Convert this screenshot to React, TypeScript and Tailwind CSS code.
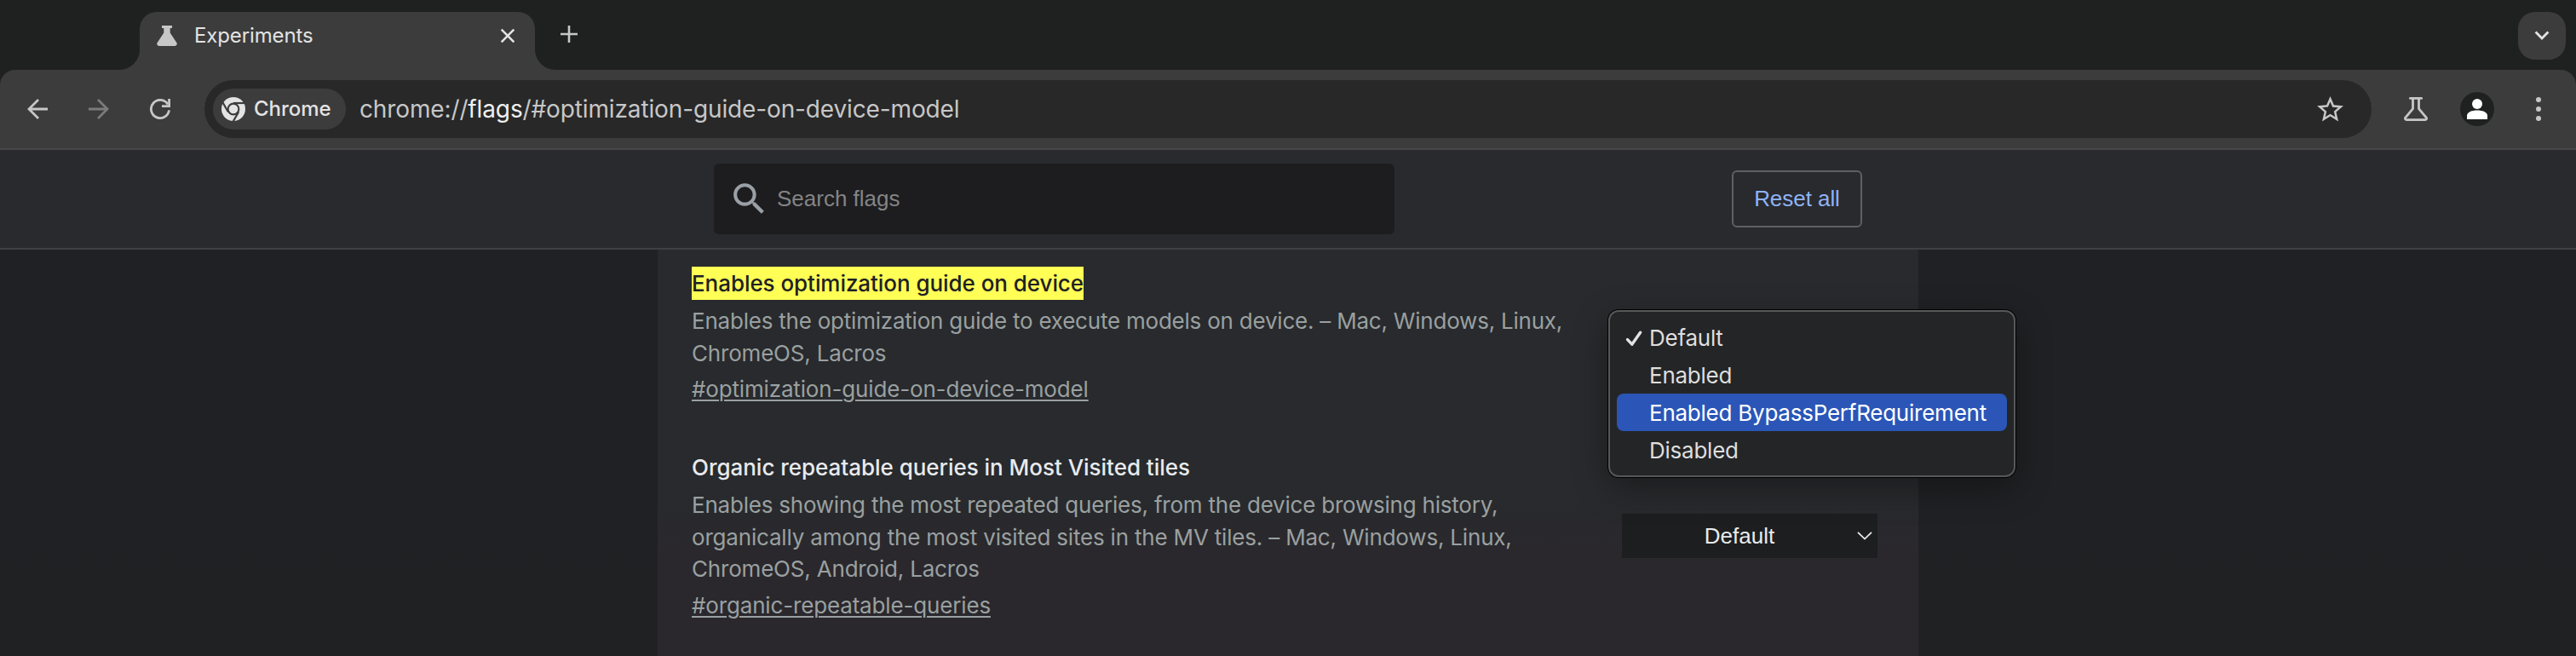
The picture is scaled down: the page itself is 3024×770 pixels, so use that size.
import type { ReactNode } from "react";

type Flag = {
  title: string;
  lines: string[];
  link: string;
  highlighted?: boolean;
};

const flags: Flag[] = [
  {
    title: "Enables optimization guide on device",
    lines: [
      "Enables the optimization guide to execute models on device. – Mac, Windows, Linux,",
      "ChromeOS, Lacros",
    ],
    link: "#optimization-guide-on-device-model",
    highlighted: true,
  },
  {
    title: "Organic repeatable queries in Most Visited tiles",
    lines: [
      "Enables showing the most repeated queries, from the device browsing history,",
      "organically among the most visited sites in the MV tiles. – Mac, Windows, Linux,",
      "ChromeOS, Android, Lacros",
    ],
    link: "#organic-repeatable-queries",
  },
];

const options = ["Default", "Enabled", "Enabled BypassPerfRequirement", "Disabled"];

function ChromeLogo() {
  return (
    <svg width="28" height="28" viewBox="-14 -14 28 28" className="shrink-0">
      <circle r="14" fill="#e3e3e3" />
      <circle r="7.4" fill="#3c3c3c" />
      <g stroke="#3c3c3c" strokeWidth="2.2">
        <path d="M0 -7H15" />
        <path d="M0 -7H15" transform="rotate(120)" />
        <path d="M0 -7H15" transform="rotate(240)" />
      </g>
      <circle r="5.3" fill="#e3e3e3" />
    </svg>
  );
}

function TabStrip() {
  return (
    <div className="flex h-[82px] items-end justify-between pr-3">
      <div className="flex h-[68px] items-end pl-[140px]">
        <div className="size-6 bg-[#3c3c3c]">
          <div className="size-6 rounded-br-[24px] bg-[#1f2120]" />
        </div>
        <div className="flex h-[68px] w-[464px] items-center rounded-t-[20px] bg-[#3c3c3c] pr-[23px] pb-3 pl-5">
          <svg width="24" height="24" viewBox="0 0 24 24" fill="#c7c7c7" className="shrink-0">
            <path d="M6 0H18V3H15.7V8.6L23.6 20.4Q24.4 23.2 21.6 24H2.4Q-.4 23.2 .4 20.4L8.3 8.6V3H6Z" />
          </svg>
          <span className="ml-[20px] grow text-[24px] leading-8 tracking-[-0.13px] text-[#e3e3e3]">
            Experiments
          </span>
          <svg width="18" height="18" viewBox="0 0 18 18" stroke="#e3e3e3" strokeWidth="2.6">
            <path d="M1.7 1.7L16.3 16.3M16.3 1.7L1.7 16.3" />
          </svg>
        </div>
        <div className="size-6 bg-[#3c3c3c]">
          <div className="size-6 rounded-bl-[24px] bg-[#1f2120]" />
        </div>
        <svg width="20" height="20" viewBox="0 0 20 20" stroke="#c7c7c7" strokeWidth="2.6" className="mb-8 ml-[6px]">
          <path d="M10 0V20M0 10H20" />
        </svg>
      </div>
      <div className="mb-3 flex size-14 items-center justify-center rounded-[20px] bg-[#3c3c3c]">
        <svg width="18" height="12" viewBox="0 0 18 12" fill="none" stroke="#e3e3e3" strokeWidth="2.8">
          <path d="M1.6 1.6L9 9L16.4 1.6" />
        </svg>
      </div>
    </div>
  );
}

function Toolbar() {
  return (
    <div className="flex h-[94px] items-center rounded-t-[18px] border-b-2 border-[#474747] bg-[#3c3c3c] pr-[41px] pl-8">
      <div className="flex w-[208px] gap-12">
        <svg width="24" height="24" viewBox="0 0 24 24" fill="none" stroke="#c7c7c7" strokeWidth="2.8">
          <path d="M24 12H2.4M13 1L2 12L13 23" />
        </svg>
        <svg width="24" height="24" viewBox="0 0 24 24" fill="none" stroke="#7b7b7b" strokeWidth="2.8">
          <path d="M0 12H21.6M11 1L22 12L11 23" />
        </svg>
        <svg width="24" height="24" viewBox="0 0 24 24" fill="none" stroke="#c7c7c7" strokeWidth="2.8">
          <path d="M22.5 13.4A10.6 10.6 0 1 1 21 6.4" />
          <path d="M22.6 0V8.6H14" />
        </svg>
      </div>
      <div className="flex h-[68px] w-[2544px] items-center rounded-full bg-[#282828] pr-[30px] pl-[10px]">
        <div className="flex h-12 w-[156px] items-center rounded-full bg-[#3c3c3c] pl-[10px]">
          <ChromeLogo />
          <span className="ml-[10px] text-[24px] leading-8 font-medium tracking-[-0.02px] text-[#e3e3e3]">Chrome</span>
        </div>
        <span className="ml-4 grow text-[28px] leading-9 tracking-[-0.13px] text-[#c7c7c7]">
          chrome://<span className="text-[#f0f0f0]">flags</span>/#optimization-guide-on-device-model
        </span>
        <svg width="37" height="37" viewBox="0 0 24 24" fill="#c7c7c7">
          <path d="M22 9.24l-7.19-.62L12 2 9.19 8.63 2 9.24l5.46 4.73L5.82 21 12 17.27 18.18 21l-1.63-7.03L22 9.24zM12 15.4l-3.76 2.27 1-4.28-3.32-2.88 4.38-.38L12 6.1l1.71 4.04 4.38.38-3.32 2.88 1 4.28L12 15.4z" />
        </svg>
      </div>
      <svg width="28" height="28" viewBox="0 0 28 28" fill="none" stroke="#c7c7c7" strokeWidth="2.8" strokeLinejoin="round" className="ml-[38px]">
        <path d="M7.4 1.4H20.6" strokeLinecap="round" />
        <path d="M10.5 1.4V13.6L1.5 24.4Q1.2 26.6 3 26.6H25Q26.8 26.6 26.5 24.4L17.5 13.6V1.4" />
      </svg>
      <svg width="40" height="40" viewBox="0 0 40 40" className="ml-[38px]">
        <circle cx="20" cy="20" r="20" fill="#1f2120" />
        <circle cx="20" cy="14" r="6" fill="#fff" />
        <path d="M8 32V28C8 23.6 14 21.6 20 21.6S32 23.6 32 28V32Z" fill="#fff" />
      </svg>
      <svg width="6" height="28" viewBox="0 0 6 28" fill="#c7c7c7" className="ml-[49px]">
        <circle cx="3" cy="3" r="3" />
        <circle cx="3" cy="14" r="3" />
        <circle cx="3" cy="25" r="3" />
      </svg>
    </div>
  );
}

function FlagsHeader() {
  return (
    <header className="flex h-[117px] items-start border-b-2 border-[#3f4042] bg-[#292a2d] pt-4 pl-[838px]">
      <div className="flex h-[83px] w-[799px] items-center rounded-[6px] bg-[#1d1d1f] pl-[17px]">
        <svg width="49" height="49" viewBox="0 0 24 24" fill="#9aa0a6">
          <path d="M15.5 14h-.79l-.28-.27C15.41 12.59 16 11.11 16 9.5 16 5.91 13.09 3 9.5 3S3 5.91 3 9.5 5.91 16 9.5 16c1.61 0 3.09-.59 4.23-1.57l.27.28v.79l5 4.99L20.49 19l-4.99-5zm-6 0C7.01 14 5 11.99 5 9.5S7.01 5 9.5 5 14 7.01 14 9.5 11.99 14 9.5 14z" />
        </svg>
        <span className="ml-[8px] pb-[2px] font-['Liberation_Sans',sans-serif] text-[26px] leading-8 text-[#848485]">
          Search flags
        </span>
      </div>
      <div className="mt-2 ml-[396px] flex h-[67px] w-[153px] items-center justify-center rounded-[6px] border-2 border-[#5f6063] pb-[2px] font-['Liberation_Sans',sans-serif] text-[26px] leading-8 tracking-[-0.05px] text-[#8fb3f7]">
        Reset all
      </div>
    </header>
  );
}

function FlagEntry({ flag, children }: { flag: Flag; children?: ReactNode }) {
  return (
    <div className="flex">
      <div className="w-[1092px] text-[26px] leading-[37.5px] tracking-[-0.19px] text-[#9aa0a0]">
        <div className="flex">
          <h3
            className={
              flag.highlighted
                ? "h-[39px] bg-[#ffff55] leading-[39px] font-medium tracking-[-0.06px] text-[#202124]"
                : "h-[39px] leading-[39px] font-medium tracking-[-0.03px] text-[#e8eaed]"
            }
          >
            {flag.title}
          </h3>
        </div>
        <div className="mt-[6px]">
          {flag.lines.map((line) => (
            <p
              key={line}
              className={
                line.startsWith("Enables") ? "tracking-[-0.22px] whitespace-nowrap" : "whitespace-nowrap"
              }
            >
              {line}
            </p>
          ))}
        </div>
        <div className="mt-[5px]">
          <span className="tracking-[-0.16px] underline decoration-2 underline-offset-[3px]">{flag.link}</span>
        </div>
      </div>
      {children}
    </div>
  );
}

function OptionMenu() {
  return (
    <div className="absolute top-[364px] left-[1888px] flex h-[196px] w-[478px] flex-col rounded-[12px] border-2 border-[#57585a] bg-[#242527] p-2 shadow-[0_0_0_1px_#000,0_12px_40px_rgba(0,0,0,0.35)]">
      {options.map((option, i) => (
        <div
          key={option}
          className={
            i === 2
              ? "flex h-11 items-center rounded-[8px] bg-[#2b56b7] text-white"
              : "flex h-11 items-center text-[#dedede]"
          }
        >
          <div className="flex w-[38px] pl-[10px]">
            {i === 0 && (
              <svg width="20" height="20" viewBox="0 0 20 20" fill="none" stroke="#e3e3e3" strokeWidth="3.4" strokeLinecap="round" strokeLinejoin="round">
                <path d="M2.6 12.6L7.8 18.2L17.6 4.2" />
              </svg>
            )}
          </div>
          <span className="pt-[2px] text-[26px] leading-8 tracking-[-0.24px]">{option}</span>
        </div>
      ))}
    </div>
  );
}

export default function App() {
  return (
    <div className="relative h-[770px] w-[3024px] overflow-hidden bg-[#1f2120] font-['Inter',sans-serif]">
      <TabStrip />
      <Toolbar />
      <FlagsHeader />
      <main className="flex h-[477px] justify-center bg-linear-to-b from-[#202124] from-60% to-[#202123]">
        <div className="flex w-[1480px] flex-col gap-[53.5px] bg-linear-to-b from-[#282a2d] from-60% to-[#2a282d] to-75% px-10 pt-5">
          <FlagEntry flag={flags[0]} />
          <FlagEntry flag={flags[1]}>
            <div className="mt-[74px] flex h-[52px] w-[300px] items-center bg-[#1d1e1f] pr-[6px]">
              <span className="w-[276px] text-center font-['Liberation_Sans',sans-serif] text-[26px] leading-8 text-[#e8eaed]">
                Default
              </span>
              <svg width="18" height="10" viewBox="0 0 18 10" fill="none" stroke="#e8eaed" strokeWidth="1.8">
                <path d="M1 .8L9 8.6L17 .8" />
              </svg>
            </div>
          </FlagEntry>
        </div>
      </main>
      <OptionMenu />
    </div>
  );
}
